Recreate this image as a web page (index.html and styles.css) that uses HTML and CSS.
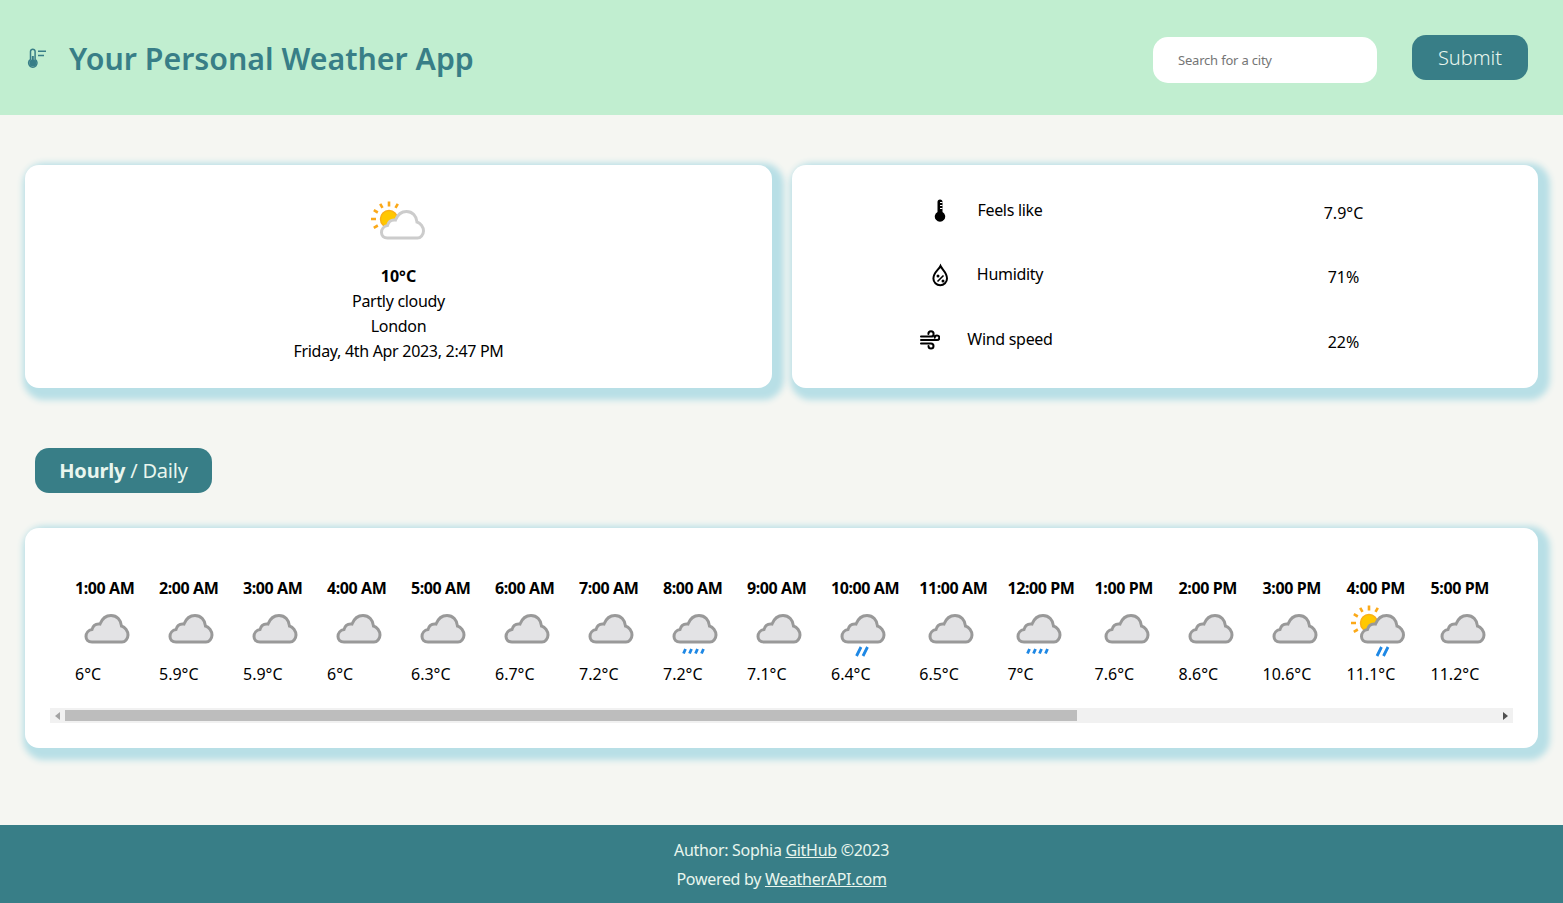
FILE: index.html
```html
<!DOCTYPE html>
<html lang="en">
<head>
    <meta charset="UTF-8">
    <meta name="viewport" content="width=device-width, initial-scale=1.0">
    <title>Your Personal Weather App</title>
    <link rel="stylesheet" href="styles.css">
</head>
<body>

    <!-- shared weather icons -->
    <svg class="sprite" width="0" height="0">
        <defs>
            <symbol id="sun" viewBox="0 0 64 64">
                <circle cx="22" cy="23" r="8.500" fill="#ffc800" stroke="#fbb016" stroke-width="1.500"/>
                <path d="M22 5.500v5M15.500 11.800l-2.300-4M10.800 16.500l-4-2.300M9 23H4M10.800 29.500l-4 2.300M28.500 11.800l2.300-4" stroke="#fba919" stroke-width="2.600" fill="none"/>
            </symbol>
            <path id="cloud-shape" d="M17 42C13 42 11 39.500 11 36.500C11 33 13.500 30 17 29.500C18 25.500 21 23.500 25 24C27 19 31 15.500 36 15.500C42 15.500 46 20 46.500 26C50 27 53 31 53 35C53 39 50 42 47 42Z"/>
            <symbol id="cloud-grey" viewBox="0 0 64 64">
                <use href="#cloud-shape" fill="#e3e3e5" stroke="#999" stroke-width="3"/>
            </symbol>
            <symbol id="cloud-white" viewBox="0 0 64 64">
                <use href="#cloud-shape" x="3.500" fill="#fff" stroke="#ccc" stroke-width="3"/>
            </symbol>
            <symbol id="cloud-sun" viewBox="0 0 64 64">
                <use href="#sun"/>
                <use href="#cloud-shape" x="3.500" fill="#e3e3e5" stroke="#999" stroke-width="3"/>
            </symbol>
            <symbol id="rain-light" viewBox="0 0 64 64">
                <path d="M20.500 53.500l2-4.500M26.500 53.500l2-4.500M32.500 53.500l2-4.500M38.500 53.500l2-4.500" stroke="#1e88e5" stroke-width="2.800" fill="none"/>
            </symbol>
            <symbol id="rain-patchy" viewBox="0 0 64 64">
                <path d="M25.500 56l4.500-9M32 56l4.500-9" stroke="#1e88e5" stroke-width="2.800" fill="none"/>
            </symbol>
        </defs>
    </svg>

    <header class="top-bar">
        <div class="brand">
            <svg class="brand-icon" viewBox="0 0 20 22" width="20" height="22" fill="none" stroke="#387e87" stroke-width="1.500">
                <path d="M5.800 2.200a2.300 2.300 0 0 1 2.300 2.300v8a4.200 4.200 0 1 1-4.600 0v-8a2.300 2.300 0 0 1 2.300-2.300z"/>
                <circle cx="5.800" cy="16" r="3.500" fill="#387e87" stroke="none"/>
                <path d="M5.800 15V9" stroke-width="2"/>
                <path d="M11 4.200h8M11 8.500h6"/>
            </svg>
            <h1>Your Personal Weather App</h1>
        </div>
        <form class="search">
            <input type="text" placeholder="Search for a city">
            <button type="button">Submit</button>
        </form>
    </header>

    <main>
        <section class="summary">
            <div class="card today">
                <svg class="weather-icon"><use href="#sun"/><use href="#cloud-white"/></svg>
                <strong>10°C</strong>
                <span>Partly cloudy</span>
                <span>London</span>
                <span>Friday, 4th Apr 2023, 2:47 PM</span>
            </div>
            <div class="card details">
                <div class="detail-row">
                    <div class="detail-label">
                        <svg viewBox="0 0 20 24" width="20" height="24">
                            <path d="M7.500 4a2.500 2.500 0 0 1 5 0v10a5.200 5.200 0 1 1-5 0z" fill="#000"/>
                            <path d="M10 4.500h2.500M10 7.500h2.500M10 10.500h2.500" stroke="#fff" stroke-width="1"/>
                        </svg>
                        <span>Feels like</span>
                    </div>
                    <div class="detail-value">7.9°C</div>
                </div>
                <div class="detail-row">
                    <div class="detail-label">
                        <svg viewBox="0 0 20 24" width="20" height="24" fill="none" stroke="#000">
                            <path d="M10.500 3C12 6.500 17 9.500 17 15.500a6.800 6.800 0 0 1-13.600 0C3.400 9.500 9 6.500 10.500 3z" stroke-width="2"/>
                            <path d="M7.500 18.500l6-6" stroke-width="1.600"/>
                            <circle cx="8" cy="13" r="1.500" fill="#000" stroke="none"/>
                            <circle cx="13" cy="18" r="1.500" fill="#000" stroke="none"/>
                        </svg>
                        <span>Humidity</span>
                    </div>
                    <div class="detail-value">71%</div>
                </div>
                <div class="detail-row">
                    <div class="detail-label">
                        <svg viewBox="0 0 20 24" width="20" height="24" fill="none" stroke="#000" stroke-width="2" stroke-linecap="round">
                            <path d="M1 9.500h10a2.600 2.600 0 1 0-2.600-2.600M1 13h16a2.300 2.300 0 1 0-2.300-2.300M1 16.500h10a2.500 2.500 0 1 1-2.500 2.500"/>
                        </svg>
                        <span>Wind speed</span>
                    </div>
                    <div class="detail-value">22%</div>
                </div>
            </div>
        </section>

        <button class="toggle" type="button"><strong>Hourly</strong> / Daily</button>

        <section class="card forecast">
            <div class="hours" id="hours"></div>
            <div class="scrollbar">
                <span class="arrow arrow-left"></span>
                <span class="track"><span class="thumb"></span></span>
                <span class="arrow arrow-right"></span>
            </div>
        </section>
    </main>

    <footer class="bottom-bar">
        <p>Author: Sophia <a href="#">GitHub</a> ©2023</p>
        <p>Powered by <a href="#">WeatherAPI.com</a></p>
    </footer>

    <script>
        // hourly forecast: time, temperature, condition
        var hours = [
            ['1:00 AM', '6', 'cloud'], ['2:00 AM', '5.9', 'cloud'], ['3:00 AM', '5.9', 'cloud'],
            ['4:00 AM', '6', 'cloud'], ['5:00 AM', '6.3', 'cloud'], ['6:00 AM', '6.7', 'cloud'],
            ['7:00 AM', '7.2', 'cloud'], ['8:00 AM', '7.2', 'light'], ['9:00 AM', '7.1', 'cloud'],
            ['10:00 AM', '6.4', 'patchy'], ['11:00 AM', '6.5', 'cloud'], ['12:00 PM', '7', 'light'],
            ['1:00 PM', '7.6', 'cloud'], ['2:00 PM', '8.6', 'cloud'], ['3:00 PM', '10.6', 'cloud'],
            ['4:00 PM', '11.1', 'sun'], ['5:00 PM', '11.2', 'cloud']
        ];

        var icons = {
            cloud: '<use href="#cloud-grey"/>',
            light: '<use href="#cloud-grey"/><use href="#rain-light"/>',
            patchy: '<use href="#cloud-grey"/><use href="#rain-patchy"/>',
            sun: '<use href="#cloud-sun"/><use href="#rain-patchy" x="4.500"/>'
        };

        var html = '';
        for (var i = 0; i < hours.length; i++) {
            html += `
                <div class="hour">
                    <strong>${hours[i][0]}</strong>
                    <svg class="weather-icon">${icons[hours[i][2]]}</svg>
                    <span>${hours[i][1]}°C</span>
                </div>`;
        }
        document.getElementById('hours').innerHTML = html;
    </script>

</body>
</html>
```

FILE: styles.css
```css
* {
    box-sizing: border-box;
}
body {
    font-family: "Noto Sans", Arial, sans-serif;
    font-size: 16px;
    letter-spacing: -0.300px;
    line-height: 25px;
    background-color: #f5f6f2;
    color: #000;
    margin: 0;
}
.sprite {
    position: absolute;
}
.top-bar {
    display: flex;
    align-items: center;
    justify-content: space-between;
    height: 115px;
    padding: 0 35px 0 27px;
    background-color: #c1eed0;
}
.brand {
    display: flex;
    align-items: center;
    gap: 22px;
}
.brand h1 {
    margin: 2px 0 0;
    font-size: 30.300px;
    letter-spacing: 0;
    line-height: 40px;
    font-weight: 600;
    color: #387e87;
}
.search {
    display: flex;
    align-items: center;
    gap: 35px;
}
.search input {
    width: 224px;
    height: 46px;
    padding: 0 25px;
    border: none;
    border-radius: 15px;
    background-color: #fff;
    font-family: inherit;
    font-size: 13px;
    letter-spacing: -0.200px;
    margin-top: 4px;
}
.search button {
    width: 116px;
    height: 45px;
    padding-bottom: 2px;
    border: none;
    border-radius: 14px;
    background-color: #387e87;
    color: #e9f6ee;
    font-family: inherit;
    font-size: 20px;
    font-weight: 300;
}
main {
    padding: 50px 25px 77px;
}
.summary {
    display: grid;
    grid-template-columns: 747px 746px;
    gap: 20px;
}
.card {
    background-color: #fff;
    border-radius: 14px;
    box-shadow: 5px 5px 6px 7px #b8dfe6;
}
.today {
    display: flex;
    flex-direction: column;
    align-items: center;
    height: 223px;
    padding-top: 31px;
}
.weather-icon {
    display: block;
    width: 64px;
    height: 64px;
    flex: none;
    overflow: visible;
}
.today strong {
    margin-top: 4px;
    letter-spacing: 0;
}
.details {
    padding: 14.500px 16px 0;
}
.detail-row {
    display: grid;
    grid-template-columns: 357px 357px;
    align-items: center;
    height: 64.500px;
}
.detail-label {
    display: flex;
    align-items: center;
    justify-content: center;
    gap: 27px;
    margin-bottom: 3px;
}
.detail-value {
    letter-spacing: 0;
    text-align: center;
    margin-top: 3px;
}
.toggle {
    display: block;
    width: 177px;
    height: 45px;
    margin: 60px 0 35px 10px;
    padding: 0;
    border: none;
    border-radius: 14px;
    background-color: #387e87;
    color: #e9f6ee;
    font-family: inherit;
    font-size: 20px;
    letter-spacing: -0.200px;
}
.forecast {
    padding: 25px;
    height: 220px;
}
.hours {
    display: flex;
    gap: 20px;
    overflow: hidden;
    padding: 23px 25px 0;
    height: 157px;
}
.hour {
    min-width: 64px;
    flex: none;
}
.hour strong,
.hour span {
    display: block;
    white-space: nowrap;
}
.hour strong {
    letter-spacing: -0.400px;
    margin-bottom: -1px;
}
.hour span {
    letter-spacing: 0;
    margin-top: -2px;
}
.scrollbar {
    display: flex;
    align-items: center;
    height: 15px;
    margin-top: -2px;
    background-color: #f1f1f1;
}
.arrow {
    flex: none;
    width: 0;
    height: 0;
    margin: 0 5px;
    border-top: 4px solid transparent;
    border-bottom: 4px solid transparent;
}
.arrow-left {
    border-right: 5px solid #a3a3a3;
}
.arrow-right {
    border-left: 5px solid #505050;
}
.track {
    display: flex;
    align-items: center;
    flex: 1;
    height: 100%;
}
.thumb {
    display: block;
    width: 1012px;
    height: 11px;
    background-color: #bdbdbd;
}
.bottom-bar {
    height: 78px;
    padding-top: 13px;
    background-color: #387e87;
    color: #e9f6ee;
    text-align: center;
}
.bottom-bar p {
    margin: 0 0 4px;
}
.bottom-bar a {
    color: inherit;
}
```
